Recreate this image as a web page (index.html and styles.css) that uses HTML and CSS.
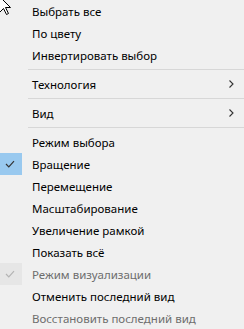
FILE: index.html
```html
<!DOCTYPE html>
<html lang="ru">
<head>
<meta charset="utf-8">
<link rel="stylesheet" href="styles.css">
</head>
<body>
<svg class="cursor" width="14" height="20" viewBox="0 0 14 20"><path d="M0.5 0.5 L0.5 16.5 L4.5 12.5 L7.5 18.5 L9.5 17.5 L6.5 11.5 L11.5 11.5 Z" fill="#fff" stroke="#000" stroke-width="1"/></svg>
<ul class="menu">
  <li class="item"><span class="chk"></span><span class="label">Выбрать все</span></li>
  <li class="item"><span class="chk"></span><span class="label">По цвету</span></li>
  <li class="item"><span class="chk"></span><span class="label">Инвертировать выбор</span></li>
  <li class="sep"></li>
  <li class="item"><span class="chk"></span><span class="label">Технология</span><svg class="sub" width="5" height="8" viewBox="0 0 5 8"><path d="M0.5 0.5 L4 4 L0.5 7.5" fill="none" stroke="#333" stroke-width="1.1"/></svg></li>
  <li class="sep"></li>
  <li class="item"><span class="chk"></span><span class="label">Вид</span><svg class="sub" width="5" height="8" viewBox="0 0 5 8"><path d="M0.5 0.5 L4 4 L0.5 7.5" fill="none" stroke="#333" stroke-width="1.1"/></svg></li>
  <li class="sep"></li>
  <li class="item"><span class="chk"></span><span class="label">Режим выбора</span></li>
  <li class="item"><span class="chk on"><svg width="10" height="8" viewBox="0 0 10 8"><path d="M1 4 L3.8 6.8 L9 1.2" fill="none" stroke="#333" stroke-width="1.2"/></svg></span><span class="label">Вращение</span></li>
  <li class="item"><span class="chk"></span><span class="label">Перемещение</span></li>
  <li class="item"><span class="chk"></span><span class="label">Масштабирование</span></li>
  <li class="item"><span class="chk"></span><span class="label">Увеличение рамкой</span></li>
  <li class="item"><span class="chk"></span><span class="label">Показать всё</span></li>
  <li class="item disabled"><span class="chk dis"><svg width="10" height="8" viewBox="0 0 10 8"><path d="M1 4 L3.8 6.8 L9 1.2" fill="none" stroke="#b4b4b4" stroke-width="1.2"/></svg></span><span class="label">Режим визуализации</span></li>
  <li class="item"><span class="chk"></span><span class="label">Отменить последний вид</span></li>
  <li class="item disabled"><span class="chk"></span><span class="label">Восстановить последний вид</span></li>
</ul>
</body>
</html>
```
FILE: styles.css
```css
html, body {
  margin: 0;
  padding: 0;
  background: #f0f0f0;
}
body {
  font-family: "Noto Sans", "Liberation Sans", sans-serif;
  font-size: 11.5px;
  color: #000;
  width: 244px;
  height: 329px;
  overflow: hidden;
  position: relative;
}
.cursor {
  position: absolute;
  left: -1px;
  top: -4px;
}
.menu {
  list-style: none;
  margin: 0;
  padding: 0;
}
.item {
  height: 22px;
  display: flex;
  align-items: center;
}
.chk {
  width: 22px;
  height: 22px;
  flex: none;
  display: flex;
  align-items: center;
  justify-content: center;
  margin-right: 10px;
}
.chk svg {
  margin-left: -2px;
}
.chk.on {
  background: #99c9ef;
}
.chk.dis {
  background: #e6e6e6;
}
.label {
  flex: 1;
  line-height: 22px;
  padding-top: 1px;
  white-space: nowrap;
}
.disabled .label {
  color: #6d6d6d;
}
.sub {
  margin-right: 10px;
}
.sep {
  height: 1px;
  background: #d7d7d7;
  margin: 3px 0 3px 28px;
}
```
